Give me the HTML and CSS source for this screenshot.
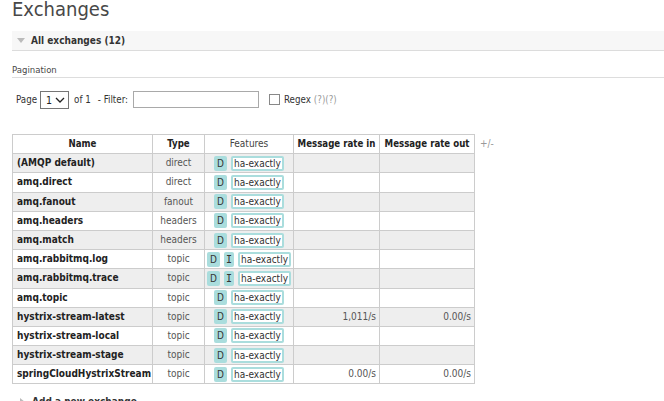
FILE: index.html
```html
<!DOCTYPE html>
<html>
<head>
<meta charset="utf-8">
<link rel="stylesheet" href="styles.css">
</head>
<body>
<div class="page">
  <h1 class="title">Exchanges</h1>
  <div class="section-head">
    <svg class="tri" width="8" height="6" viewBox="0 0 8 6"><polygon points="0,0 8,0 4,5" fill="#bbb"/></svg>
    <span>All exchanges (12)</span>
  </div>
  <div class="pag-title">Pagination</div>
  <div class="pag-row">
    <span class="lbl">Page</span>
    <span class="select-wrap">
      <select class="sel"><option>1</option></select>
      <svg class="chev" width="10" height="6" viewBox="0 0 10 6"><polyline points="1,1 5,5 9,1" fill="none" stroke="#222" stroke-width="1.3"/></svg>
    </span>
    <span class="lbl of">of 1</span>
    <span class="lbl filter">- Filter:</span>
    <input class="filter-input" type="text">
    <input class="chk" type="checkbox">
    <span class="lbl regex">Regex</span>
    <span class="help">(?)(?)</span>
  </div>
  <div class="table-row">
    <table class="list">
      <colgroup>
        <col class="c-name"><col class="c-type"><col class="c-feat"><col class="c-in"><col class="c-out">
      </colgroup>
      <thead>
        <tr><th>Name</th><th>Type</th><th class="normal">Features</th><th>Message rate in</th><th>Message rate out</th></tr>
      </thead>
      <tbody>
        <tr class="alt"><td class="name">(AMQP default)</td><td class="type">direct</td><td class="feat"><span class="b">D</span><span class="pol">ha-exactly</span></td><td class="rate"></td><td class="rate"></td></tr>
        <tr><td class="name">amq.direct</td><td class="type">direct</td><td class="feat"><span class="b">D</span><span class="pol">ha-exactly</span></td><td class="rate"></td><td class="rate"></td></tr>
        <tr class="alt"><td class="name">amq.fanout</td><td class="type">fanout</td><td class="feat"><span class="b">D</span><span class="pol">ha-exactly</span></td><td class="rate"></td><td class="rate"></td></tr>
        <tr><td class="name">amq.headers</td><td class="type">headers</td><td class="feat"><span class="b">D</span><span class="pol">ha-exactly</span></td><td class="rate"></td><td class="rate"></td></tr>
        <tr class="alt"><td class="name">amq.match</td><td class="type">headers</td><td class="feat"><span class="b">D</span><span class="pol">ha-exactly</span></td><td class="rate"></td><td class="rate"></td></tr>
        <tr><td class="name">amq.rabbitmq.log</td><td class="type">topic</td><td class="feat"><span class="b">D</span><span class="b serif">I</span><span class="pol">ha-exactly</span></td><td class="rate"></td><td class="rate"></td></tr>
        <tr class="alt"><td class="name">amq.rabbitmq.trace</td><td class="type">topic</td><td class="feat"><span class="b">D</span><span class="b serif">I</span><span class="pol">ha-exactly</span></td><td class="rate"></td><td class="rate"></td></tr>
        <tr><td class="name">amq.topic</td><td class="type">topic</td><td class="feat"><span class="b">D</span><span class="pol">ha-exactly</span></td><td class="rate"></td><td class="rate"></td></tr>
        <tr class="alt"><td class="name">hystrix-stream-latest</td><td class="type">topic</td><td class="feat"><span class="b">D</span><span class="pol">ha-exactly</span></td><td class="rate">1,011/s</td><td class="rate">0.00/s</td></tr>
        <tr><td class="name">hystrix-stream-local</td><td class="type">topic</td><td class="feat"><span class="b">D</span><span class="pol">ha-exactly</span></td><td class="rate"></td><td class="rate"></td></tr>
        <tr class="alt"><td class="name">hystrix-stream-stage</td><td class="type">topic</td><td class="feat"><span class="b">D</span><span class="pol">ha-exactly</span></td><td class="rate"></td><td class="rate"></td></tr>
        <tr><td class="name">springCloudHystrixStream</td><td class="type">topic</td><td class="feat"><span class="b">D</span><span class="pol">ha-exactly</span></td><td class="rate">0.00/s</td><td class="rate">0.00/s</td></tr>
      </tbody>
    </table>
    <span class="plusminus">+/-</span>
  </div>
  <div class="section-head hidden">
    <svg class="tri" width="6" height="8" viewBox="0 0 6 8"><polygon points="0,0 5,4 0,8" fill="#bbb"/></svg>
    <span>Add a new exchange</span>
  </div>
</div>
</body>
</html>
```
FILE: styles.css
```css
html, body {
  margin: 0;
  padding: 0;
  background: #fff;
}
body {
  font-family: "DejaVu Sans Condensed", "DejaVu Sans", sans-serif;
  font-stretch: condensed;
  font-size: 10px;
  color: #484848;
  overflow: hidden;
}
.page {
  padding-left: 12px;
}
.title {
  margin: 0;
  font-size: 20px;
  font-weight: normal;
  line-height: 18px;
  color: #484848;
}
.section-head {
  margin-top: 13px;
  height: 19px;
  background: #f7f7f7;
  border-bottom: 1px solid #dcdcdc;
  display: flex;
  align-items: center;
  padding-left: 5px;
  font-weight: bold;
  font-size: 10px;
  color: #333;
}
.section-head .tri {
  margin-right: 6px;
}
.section-head.hidden {
  margin-top: 8px;
  background: #fff;
  border-bottom: none;
  padding-left: 8px;
}
.pag-title {
  margin-top: 13px;
  font-size: 9.5px;
  line-height: 12px;
  padding-bottom: 1px;
  border-bottom: 1px solid #ddd;
  color: #484848;
}
.pag-row {
  display: flex;
  align-items: center;
  height: 19px;
  margin-top: 12px;
  padding-left: 4px;
  color: #333;
  font-size: 9.7px;
}
.lbl {
  line-height: 12px;
}
.select-wrap {
  position: relative;
  margin-left: 3px;
  display: inline-block;
  width: 29px;
  height: 18px;
}
.sel {
  -webkit-appearance: none;
  appearance: none;
  box-sizing: border-box;
  width: 29px;
  height: 18px;
  border: 1px solid #767676;
  border-radius: 0;
  background: #fff;
  font-family: inherit;
  font-size: 10.5px;
  color: #222;
  padding: 0 0 0 5px;
  margin: 0;
}
.chev {
  position: absolute;
  right: 4px;
  top: 6px;
  pointer-events: none;
}
.of {
  margin-left: 5px;
}
.filter {
  margin-left: 7px;
}
.filter-input {
  box-sizing: border-box;
  margin: 0 0 0 5px;
  width: 126px;
  height: 17px;
  border: 1px solid #a9a9a9;
  padding: 0;
}
.chk {
  -webkit-appearance: none;
  appearance: none;
  box-sizing: border-box;
  width: 11px;
  height: 11px;
  margin: 0 0 0 10px;
  border: 1px solid #888;
  background: #fff;
  border-radius: 0;
}
.regex {
  margin-left: 4px;
}
.help {
  margin-left: 3px;
  color: #999;
}
.table-row {
  display: flex;
  align-items: flex-start;
  margin-top: 25px;
}
.list {
  border-collapse: collapse;
  table-layout: fixed;
  width: 462px;
  border: 1px solid #ccc;
}
.c-name { width: 140px; }
.c-type { width: 52px; }
.c-feat { width: 89px; }
.c-in { width: 86px; }
.c-out { width: 95px; }
.list th, .list td {
  border: 1px solid #ccc;
  height: 18.2px;
  padding: 0 3px;
  line-height: 12px;
  white-space: nowrap;
  overflow: hidden;
}
.list th {
  font-weight: bold;
  color: #222;
  text-align: center;
  background: #fff;
  font-size: 9.6px;
}
.list th.normal {
  font-weight: normal;
  color: #444;
  font-size: 10px;
}
.list tr.alt td {
  background: #eee;
}
.list td.name {
  font-weight: bold;
  color: #222;
  text-align: left;
  padding-left: 4px;
}
.list td.type {
  text-align: center;
  color: #555;
}
.list td.feat {
  text-align: center;
  padding: 0;
  color: #333;
}
.list td.rate {
  text-align: right;
  color: #555;
}
.b {
  display: inline-block;
  vertical-align: middle;
  background: #aadddd;
  color: #333;
  height: 15px;
  line-height: 15px;
  padding: 0 3px;
  border-radius: 2px;
  margin-right: 4px;
}
.b.serif {
  font-family: "DejaVu Sans Mono", monospace;
  padding: 0 2px;
}
.pol {
  display: inline-block;
  vertical-align: middle;
  box-sizing: border-box;
  height: 15px;
  line-height: 11px;
  border: 2px solid #aadddd;
  border-radius: 2px;
  background: #fff;
  padding: 0 1px;
  color: #333;
}
.plusminus {
  margin-left: 5px;
  margin-top: 4px;
  color: #999;
  font-size: 10px;
}
```
